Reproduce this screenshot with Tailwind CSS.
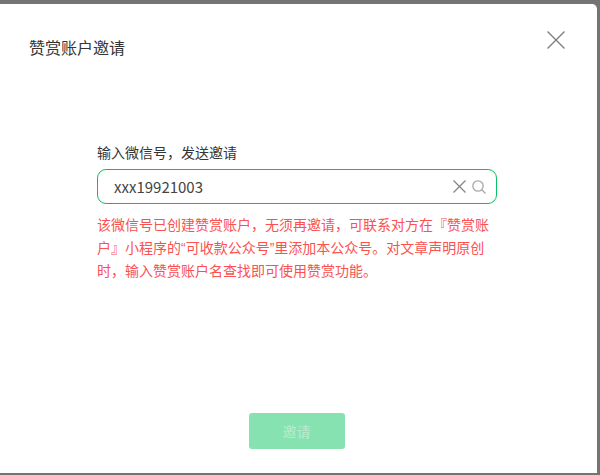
<!DOCTYPE html>
<html lang="zh-CN">
<head>
<meta charset="utf-8">
<script src="https://cdn.jsdelivr.net/npm/@tailwindcss/browser@4"></script>
</head>
<body class="m-0">
<div class="w-[600px] h-[475px] overflow-hidden bg-[#747474] pt-[4px] pr-[3px] pb-[2px] font-['Noto_Sans_CJK_SC','Noto_Sans',sans-serif]">
  <div class="h-full bg-white rounded-tr-[5px] flex flex-col">
    <div class="flex justify-between items-start pl-[29px] pr-[32px]">
      <h1 class="m-0 mt-[31px] text-[16px] leading-[24px] font-normal text-[#353535]">赞赏账户邀请</h1>
      <svg class="mt-[27px]" width="18" height="18" viewBox="0 0 18 18" fill="none" stroke="#808080" stroke-width="1.4"><path d="M0.5 0.5 17.5 17.5M17.5 0.5 0.5 17.5"/></svg>
    </div>
    <div class="ml-[97px] w-[400px] mt-[83px] flex-1">
      <p class="m-0 text-[14px] leading-[20px] text-[#353535]">输入微信号，发送邀请</p>
      <div class="mt-[7px] h-[35px] border border-[#07c160] rounded-[9px] pl-[16px] pr-[10px] flex items-center justify-between">
        <span class="pt-[1px] text-[15px] text-[#444444]">xxx19921003</span>
        <div class="flex items-center gap-[6px]">
          <svg width="13" height="13" viewBox="0 0 13 13" fill="none" stroke="#858585" stroke-width="1.3"><path d="M0.5 0.5 12.5 12.5M12.5 0.5 0.5 12.5"/></svg>
          <svg width="14" height="14" viewBox="0 0 14 14" fill="none" stroke="#a8a8a8" stroke-width="1.3"><circle cx="6" cy="6" r="5.2"/><path d="M9.8 9.8 13.5 13.5"/></svg>
        </div>
      </div>
      <p class="m-0 mt-[9px] text-[14px] leading-[22.5px] text-[#fa5151]">该微信号已创建赞赏账户，无须再邀请，可联系对方在『赞赏账户』小程序的<span class="font-['Liberation_Sans']">“</span>可收款公众号<span class="font-['Liberation_Sans']">”</span>里添加本公众号。对文章声明原创时，输入赞赏账户名查找即可使用赞赏功能。</p>
    </div>
    <div class="flex justify-center pb-[24px] pr-[4px]">
      <button class="w-[96px] h-[36px] rounded-[3px] bg-[#86e2b0] text-[14px] text-[#b8ecd0]">邀请</button>
    </div>
  </div>
</div>
</body>
</html>
